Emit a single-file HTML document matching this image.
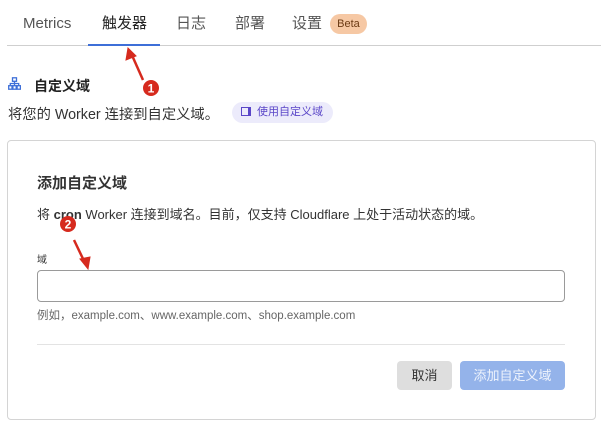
<!DOCTYPE html>
<html><head><meta charset="utf-8"><style>
body{margin:0;width:601px;height:427px;background:#fff;font-family:"Liberation Sans","Noto Sans CJK SC",sans-serif;color:#313131;position:relative;overflow:hidden}
.a{position:absolute;white-space:nowrap}
.tab{font-size:15px;top:14px;line-height:20px;color:#555}
</style></head><body>
<div class="a tab" style="left:23px">Metrics</div>
<div class="a tab" style="left:102px;color:#222">触发器</div>
<div class="a tab" style="left:176px">日志</div>
<div class="a tab" style="left:235px">部署</div>
<div class="a tab" style="left:292px">设置</div>
<div class="a" style="left:330px;top:14px;width:37px;height:20px;border-radius:10px;background:#f6c8a4;color:#6b3a14;font-size:11px;line-height:20px;text-align:center">Beta</div>
<div class="a" style="left:7px;top:45px;width:594px;height:1px;background:#cfcfcf"></div>
<div class="a" style="left:88px;top:44px;width:72px;height:2px;background:#3e6fd8"></div>

<svg class="a" style="left:8px;top:77px" width="13" height="13" viewBox="0 0 13 13" fill="none" stroke="#3e6fd8" stroke-width="1.3"><rect x="4.5" y="0.8" width="4" height="3.5"/><rect x="0.7" y="8.7" width="3.3" height="3.5"/><rect x="4.9" y="8.7" width="3.3" height="3.5"/><rect x="9.1" y="8.7" width="3.3" height="3.5"/><path d="M6.5 4.3V8.7M2.3 8.7V6.5H10.7V8.7"/></svg>
<div class="a" style="left:34px;top:76px;font-size:14px;font-weight:bold;color:#222">自定义域</div>
<div class="a" style="left:8px;top:103px;font-size:14.3px;color:#333">将您的 Worker 连接到自定义域。</div>
<div class="a" style="left:232px;top:102px;width:101px;height:21px;border-radius:11px;background:#ecebfb;color:#5a46c8;font-size:11px;line-height:21px"><span style="display:inline-block;margin-left:9px;width:10px;height:9px;border:1.3px solid #5a46c8;box-sizing:border-box;vertical-align:-1px;margin-right:6px;border-right-width:3px"></span>使用自定义域</div>

<div class="a" style="left:7px;top:140px;width:587px;height:278px;border:1px solid #d4d4d4;border-radius:4px"></div>
<div class="a" style="left:37px;top:172px;font-size:15px;font-weight:bold;color:#333">添加自定义域</div>
<div class="a" style="left:37px;top:204px;font-size:13px;color:#333">将 <b>cron</b> Worker 连接到域名。目前，仅支持 Cloudflare 上处于活动状态的域。</div>
<div class="a" style="left:37px;top:251px;font-size:10px;color:#333">域</div>
<div class="a" style="left:37px;top:270px;width:528px;height:32px;border:1px solid #9a9a9a;border-radius:4px;box-sizing:border-box"></div>
<div class="a" style="left:37px;top:307px;font-size:11.5px;color:#666">例如，example.com、www.example.com、shop.example.com</div>
<div class="a" style="left:37px;top:344px;width:528px;height:1px;background:#e3e3e3"></div>
<div class="a" style="left:397px;top:361px;width:55px;height:29px;border-radius:4px;background:#dedede;font-size:13px;line-height:29px;text-align:center;color:#333">取消</div>
<div class="a" style="left:460px;top:361px;width:105px;height:29px;border-radius:4px;background:#94b3ea;font-size:13px;line-height:29px;text-align:center;color:#eef3fc">添加自定义域</div>

<svg class="a" style="left:0;top:0" width="601" height="427">
<g fill="#d62a1e" stroke="#d62a1e">
<path d="M143 80 L131 53" stroke-width="2.5"/><path d="M128 48 L126 60 L136 56Z" stroke-width="1"/>
<path d="M74 240 L85 263" stroke-width="2.5"/><path d="M88 269 L80 259 L90 257Z" stroke-width="1"/>
<circle cx="151" cy="88" r="8" stroke="none"/><circle cx="68" cy="224" r="8" stroke="none"/>
</g>
<text x="151" y="92.5" fill="#fff" font-size="12" font-weight="bold" text-anchor="middle" font-family="Liberation Sans">1</text>
<text x="68" y="228.5" fill="#fff" font-size="12" font-weight="bold" text-anchor="middle" font-family="Liberation Sans">2</text>
</svg>
</body></html>
